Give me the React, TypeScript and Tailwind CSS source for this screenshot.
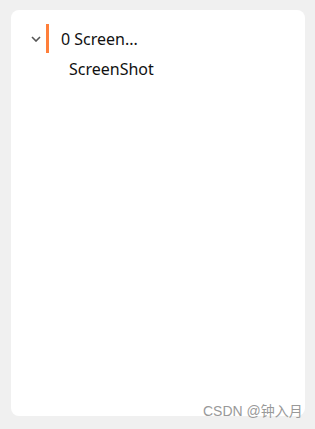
import React from "react";

const App = () => {
  return (
    <div
      className="relative h-[429px] w-[315px] overflow-hidden bg-[#f0f0f0] pt-[10px] pl-[11px] pr-[10px]"
      style={{ fontFamily: '"Noto Sans", "Noto Sans CJK SC", sans-serif' }}
    >
      <div className="h-[406px] w-[294px] rounded-[8px] bg-white pt-[14px]">
        <div className="flex h-[29px] items-center">
          <div className="ml-[20px] flex w-[10px] items-center justify-center">
            <svg width="10" height="6" viewBox="0 0 10 6" fill="none">
              <path d="M1 1l4 4 4-4" stroke="#555" strokeWidth="1.6" />
            </svg>
          </div>
          <div className="ml-[5px] h-[29px] w-[3px] bg-[#ff7f3a]" />
          <span className="ml-[12px] text-[16px] leading-none text-[#111]">0 Screen...</span>
        </div>
        <div className="ml-[58px] mt-[6px] text-[16px] leading-[20px] text-[#111]">ScreenShot</div>
      </div>
      <div
        className="absolute left-[203px] top-[402px] text-[14px] leading-[18px] text-[#999]"
        style={{ fontFamily: '"Liberation Sans", "Noto Sans CJK SC", sans-serif' }}
      >
        CSDN @钟入月
      </div>
    </div>
  );
};

export default App;
